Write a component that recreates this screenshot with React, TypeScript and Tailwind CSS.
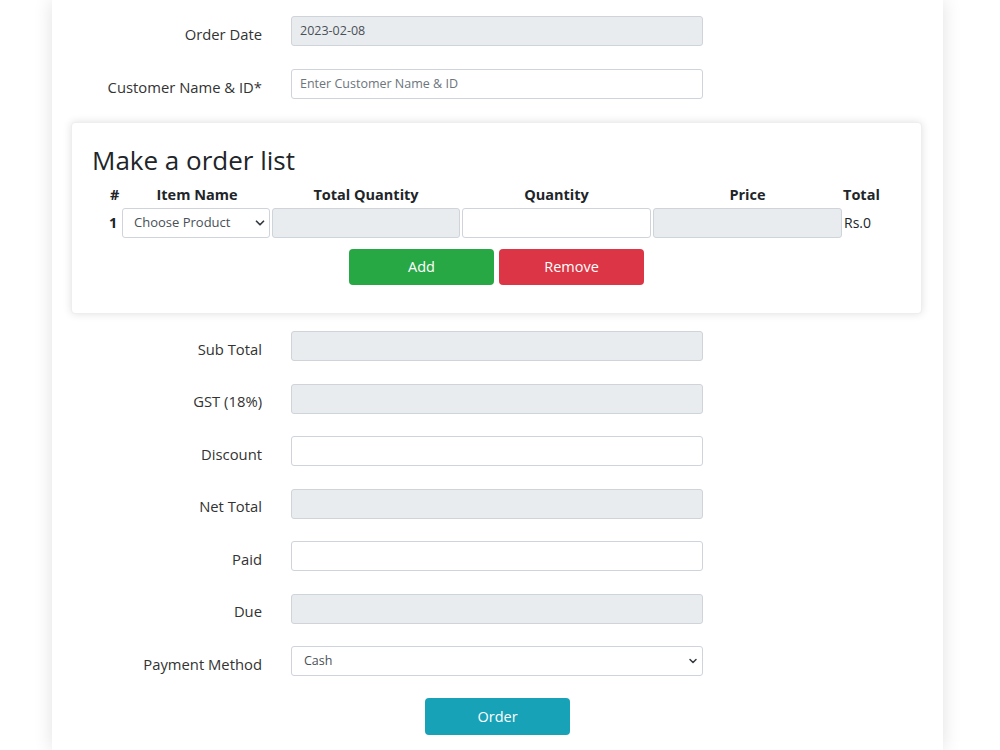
import { ChevronDown } from 'lucide-react';

const font = { fontFamily: '"Open Sans", "Noto Sans", Arial, sans-serif' };

function Field({ label, gray, value, placeholder }: { label: string; gray?: boolean; value?: string; placeholder?: string }) {
  return (
    <div className="flex items-center h-[30px]">
      <div className="w-[210px] text-right text-[14.8px] text-[#333] pt-[6px]">{label}</div>
      <div
        className={`ml-[29px] w-[412px] h-[30px] rounded-[3px] border border-[#ced4da] px-[8px] flex items-center text-[12.5px] ${
          gray ? 'bg-[#e9ecef] text-[#495057]' : 'bg-white text-[#6c757d]'
        }`}
      >
        {value ?? placeholder ?? ''}
      </div>
    </div>
  );
}

function Cell({ gray }: { gray?: boolean }) {
  return (
    <div
      className={`h-[30px] rounded-[3px] border border-[#ced4da] ${gray ? 'bg-[#e9ecef]' : 'bg-white'}`}
    />
  );
}

export default function App() {
  return (
    <div className="min-h-[750px] bg-white" style={font}>
      <div className="ml-[52px] w-[891px] min-h-[750px] bg-white shadow-[0_0_18px_rgba(0,0,0,0.12)] pt-[16px]">
        <div className="flex flex-col gap-[23px]">
          <Field label="Order Date" gray value="2023-02-08" />
          <Field label="Customer Name & ID*" placeholder="Enter Customer Name & ID" />
        </div>

        <div className="mt-[23px] ml-[19px] w-[851px] h-[192px] bg-white rounded-[4px] border border-[#eee] shadow-[0_0_8px_rgba(0,0,0,0.12)] pt-[20px] px-[20px]">
          <h2 className="text-[26px] leading-[34px] text-[#212529] font-medium">Make a order list</h2>
          <div className="mt-[7px] flex text-[14.5px] font-bold text-[#212529]">
            <div className="w-[31px] pl-[18px]">#</div>
            <div className="w-[148px] text-center">Item Name</div>
            <div className="w-[190px] text-center">Total Quantity</div>
            <div className="w-[191px] text-center">Quantity</div>
            <div className="w-[191px] text-center">Price</div>
            <div className="pl-[0px]">Total</div>
          </div>
          <div className="mt-[2px] flex items-center gap-[2px]">
            <div className="w-[28px] pl-[17px] text-[14.5px] font-bold text-[#212529]">1</div>
            <div className="w-[148px] h-[30px] rounded-[3px] border border-[#ced4da] bg-white flex items-center justify-between pl-[11px] pr-[2px] text-[13px] text-[#495057]">
              <span>Choose Product</span>
              <ChevronDown className="w-[14px] h-[14px] text-[#343a40]" strokeWidth={3} />
            </div>
            <div className="w-[188px]"><Cell gray /></div>
            <div className="w-[189px]"><Cell /></div>
            <div className="w-[189px]"><Cell gray /></div>
            <div className="text-[14px] text-[#212529]">Rs.0</div>
          </div>
          <div className="mt-[11px] flex justify-center gap-[5px]">
            <button className="w-[145px] h-[36px] rounded-[4px] bg-[#28a745] text-white text-[14.5px]">Add</button>
            <button className="w-[145px] h-[36px] rounded-[4px] bg-[#dc3545] text-white text-[14.5px]">Remove</button>
          </div>
        </div>

        <div className="mt-[17px] flex flex-col gap-[22.5px]">
          <Field label="Sub Total" gray />
          <Field label="GST (18%)" gray />
          <Field label="Discount" />
          <Field label="Net Total" gray />
          <Field label="Paid" />
          <Field label="Due" gray />
          <div className="flex items-center h-[30px]">
            <div className="w-[210px] text-right text-[14.8px] text-[#333] pt-[6px]">Payment Method</div>
            <div className="ml-[29px] w-[412px] h-[30px] rounded-[3px] border border-[#ced4da] bg-white pl-[12px] pr-[3px] flex items-center justify-between text-[12.5px] text-[#495057]">
              <span>Cash</span>
              <ChevronDown className="w-[12px] h-[12px] text-[#343a40]" strokeWidth={3} />
            </div>
          </div>
        </div>

        <div className="mt-[22px] pl-[373px]">
          <button className="w-[145px] h-[37px] rounded-[4px] bg-[#17a2b8] text-white text-[14.5px]">Order</button>
        </div>
      </div>
    </div>
  );
}
